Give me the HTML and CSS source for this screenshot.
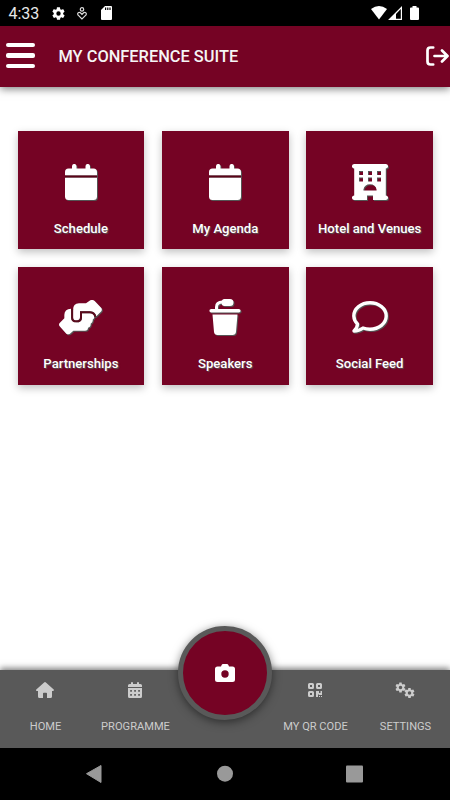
FILE: index.html
```html
<!DOCTYPE html>
<html lang="en">
<head>
    <meta charset="UTF-8">
    <meta name="viewport" content="width=device-width, initial-scale=1.0">
    <title>My Conference Suite</title>
    <link rel="stylesheet" href="styles.css">
</head>
<body>

    <!-- Shared shapes -->
    <svg class="defs" width="0" height="0">
        <symbol id="gear" viewBox="0 0 24 24">
            <path fill-rule="evenodd" d="M19.4 13a7.5 7.5 0 0 0 0-2l2.1-1.7c.2-.1.2-.4.1-.6l-2-3.5c-.1-.2-.4-.3-.6-.2l-2.5 1a7.7 7.7 0 0 0-1.7-1L14.4 2.4a.5.5 0 0 0-.5-.4h-4a.5.5 0 0 0-.5.4L9.1 5a7.7 7.7 0 0 0-1.7 1l-2.5-1c-.2-.1-.5 0-.6.2l-2 3.5c-.1.2-.1.5.1.6L4.5 11a7.5 7.5 0 0 0 0 2l-2.1 1.7c-.2.1-.2.4-.1.6l2 3.5c.1.2.4.3.6.2l2.5-1a7.7 7.7 0 0 0 1.7 1l.4 2.6c0 .2.2.4.5.4h4c.3 0 .5-.2.5-.4l.4-2.6a7.7 7.7 0 0 0 1.7-1l2.5 1c.2.1.5 0 .6-.2l2-3.5c.1-.2.1-.5-.1-.6zM12 15.5a3.5 3.5 0 1 1 0-7 3.5 3.5 0 0 1 0 7z"/>
        </symbol>
        <symbol id="calendar" viewBox="0 0 32 36">
            <path d="M0 11.5V8q0-3.5 3.5-3.5H7V2.2a2.200 2.200 0 0 1 4.500 0v2.300h9V2.200a2.200 2.200 0 0 1 4.500 0v2.300h3.500Q32 4.500 32 8v3.500zM0 13.500h32v19q0 3.500-3.500 3.500h-25Q0 36 0 32.500z"/>
            <path class="gap" d="M0 11.500h32v2H0z"/>
        </symbol>
    </svg>

    <div class="status-bar">
        <span class="time">4:33</span>
        <svg class="status-gear"><use href="#gear"/></svg>
        <svg class="status-care outline" width="10" height="13" viewBox="0 0 10 13" stroke="#ddd" stroke-width="1.2">
            <circle cx="5" cy="2.4" r="1.7"/>
            <path d="M5 12 1.2 8.2a1.500 1.500 0 0 1 2.200-2.400L5 7.400l1.600-1.600a1.500 1.500 0 0 1 2.200 2.400z"/>
        </svg>
        <svg class="status-sd" width="11" height="14" viewBox="0 0 11 14">
            <path fill-rule="evenodd" d="M4 0h6q1 0 1 1v12q0 1-1 1H1q-1 0-1-1V4zM4 1.500V4h1.200V1.500zM6.200 1.500V4h1.200V1.500zM8.400 1.500V4h1.200V1.500z"/>
        </svg>
        <div class="status-right">
            <svg width="16" height="14" viewBox="0 0 16 14"><path d="M0 3Q8-3 16 3L8 13.500z"/></svg>
            <svg class="signal" width="14" height="14" viewBox="0 0 14 14"><path fill-rule="evenodd" d="M14 0v14H0zM12.800 3 8 7.900V12.800h4.800z"/></svg>
            <svg width="9" height="14" viewBox="0 0 9 14"><path d="M2.500 0h4v1.500H8q1 0 1 1V13q0 1-1 1H1q-1 0-1-1V2.500q0-1 1-1h1.500z"/></svg>
        </div>
    </div>

    <header class="header">
        <button class="menu-btn" aria-label="Menu"><span></span><span></span><span></span></button>
        <h1>MY CONFERENCE SUITE</h1>
        <svg class="logout outline" width="23" height="20" viewBox="0 0 23 20" stroke="#fff" stroke-width="2.7" stroke-linecap="round" stroke-linejoin="round">
            <path d="M7.200 1.500H4.500q-3 0-3 3v11q0 3 3 3h2.700M8.500 10h12M16 4.500l5.500 5.500-5.500 5.500"/>
        </svg>
    </header>

    <main class="tiles">
        <a class="tile">
            <span class="tile-icon"><svg width="32" height="36"><use href="#calendar"/></svg></span>
            <span class="label">Schedule</span>
        </a>
        <a class="tile">
            <span class="tile-icon"><svg width="32" height="36"><use href="#calendar"/></svg></span>
            <span class="label">My Agenda</span>
        </a>
        <a class="tile">
            <span class="tile-icon">
                <svg width="36" height="36" viewBox="0 0 36 36">
                    <path fill-rule="evenodd" d="M2.200 0h31.600a2.200 2.200 0 0 1 0 4.500v27a2.200 2.200 0 0 1 0 4.500H21v-4.500h-6V36H2.200a2.200 2.200 0 0 1 0-4.500v-27a2.200 2.200 0 0 1 0-4.500zM7 7v4h4V7zM16 7v4h4V7zM25 7v4h4V7zM7 13.500v4h4v-4zM16 13.500v4h4v-4zM25 13.500v4h4v-4zM12 26.500h12q.8 0 .6-.8a6.700 6.700 0 0 0-13.200 0q-.2.800.6.800z"/>
                </svg>
            </span>
            <span class="label">Hotel and Venues</span>
        </a>
        <a class="tile">
            <span class="tile-icon">
                <svg width="43" height="35" viewBox="0 0 129 105">
                    <path d="M42 52V31Q42 10 60 10H81L94 1Q101-2 107 3L127 24Q130 29 127 34L112 49Q108 34 93 34H63V52Q63 58 58 60Q50 65 44 59Q42 56 42 52z"/>
                    <path d="M36 26Q16 27 16 45V55L2 69Q-2 74 2 79L22 101Q27 105 33 101L43 92H78Q87 92 87 83Q96 81 95 71Q103 66 101 59Q109 53 104 45Q101 39 92 40H69V53Q68 67 52 67Q37 66 36 53z"/>
                    <path class="grip" d="M39.500 27V53Q39.500 64 52 64Q66 64 66 53V37H92Q106 38 109 50"/>
                </svg>
            </span>
            <span class="label">Partnerships</span>
        </a>
        <a class="tile">
            <span class="tile-icon">
                <svg width="32" height="36" viewBox="0 0 32 36">
                    <path class="outline" d="M7.500 11V8q0-5 6-5" stroke="#fff" stroke-width="3"/>
                    <path d="M15.500 0H21a3.500 3.500 0 0 1 0 7h-5.500q-3 0-3-3.500t3-3.500zM2.200 10h27.600a1.800 1.800 0 0 1 0 3.600H2.200a1.800 1.800 0 0 1 0-3.600zM3.500 15.500h25l-1.500 17.500q-.4 3-3.500 3h-15Q5.400 36 5 33z"/>
                </svg>
            </span>
            <span class="label">Speakers</span>
        </a>
        <a class="tile">
            <span class="tile-icon">
                <svg class="outline" width="36" height="32" viewBox="0 0 36 32" stroke="#fff" stroke-width="3.4" stroke-linejoin="round">
                    <path d="M5.500 23A11.500 11.500 0 0 1 1.800 15C1.800 7.700 9 1.800 18 1.800S34.200 7.700 34.200 15 27 28.200 18 28.200q-3.800 0-7-1.200-4 3-9 3 3.500-3.500 3.500-7z"/>
                </svg>
            </span>
            <span class="label">Social Feed</span>
        </a>
    </main>

    <nav class="tab-bar">
        <a class="tab">
            <svg width="18" height="16" viewBox="0 0 18 16"><path d="M9 0q.5 0 .9.400l7.800 7q.5.600.1 1.200-.3.400-.8.400h-1v5.500q0 1.500-1.500 1.500H11v-4.500q0-.8-.8-.8H7.800q-.8 0-.8.800V16H3.500Q2 16 2 14.500V9H1Q.4 9 .1 8.500q-.2-.6.2-1.100l7.800-7Q8.500 0 9 0z"/></svg>
            <span>HOME</span>
        </a>
        <a class="tab">
            <svg width="14" height="16" viewBox="0 0 14 16"><path fill-rule="evenodd" d="M0 5V3.500Q0 2 1.500 2H3V1a1 1 0 0 1 2 0v1h4V1a1 1 0 0 1 2 0v1h1.500Q14 2 14 3.500V5zM0 6h14v8.500q0 1.500-1.500 1.500h-11Q0 16 0 14.500zM2.200 8v1.700h1.700V8zM6.200 8v1.700h1.700V8zM10.200 8v1.700h1.700V8zM2.200 12v1.700h1.700V12zM6.200 12v1.700h1.700V12zM10.200 12v1.700h1.700V12z"/></svg>
            <span>PROGRAMME</span>
        </a>
        <a class="fab">
            <svg width="20" height="18" viewBox="0 0 20 18"><path fill-rule="evenodd" d="M6.500 1.200Q6.900 0 8.200 0h3.600q1.300 0 1.700 1.200l.5 1.300h3.500Q20 2.500 20 5v10.500q0 2.500-2.500 2.500h-15Q0 18 0 15.500V5Q0 2.500 2.500 2.500H6zM10 6.300a3.700 3.700 0 1 0 0 7.400 3.700 3.700 0 1 0 0-7.400z"/></svg>
        </a>
        <a class="tab">
            <svg width="14" height="14" viewBox="0 0 14 14"><path fill-rule="evenodd" d="M1.500 0h3Q6 0 6 1.500v3Q6 6 4.500 6h-3Q0 6 0 4.500v-3Q0 0 1.500 0zM2 2v2h2V2zM9.500 0h3Q14 0 14 1.500v3Q14 6 12.500 6h-3Q8 6 8 4.500v-3Q8 0 9.500 0zM10 2v2h2V2zM1.500 8h3Q6 8 6 9.500v3Q6 14 4.500 14h-3Q0 14 0 12.500v-3Q0 8 1.500 8zM2 10v2h2v-2zM8 8h3v2h1.500V8H14v4h-3.500v-1H10v3H8zM11 13h1v1h-1zM13 13h1v1h-1z"/></svg>
            <span>MY QR CODE</span>
        </a>
        <a class="tab">
            <svg width="20" height="16" viewBox="0 0 20 16">
                <use href="#gear" x="-.5" y="-.5" width="12" height="12"/>
                <use href="#gear" x="8.5" y="5" width="12" height="12"/>
            </svg>
            <span>SETTINGS</span>
        </a>
    </nav>

    <div class="android-nav">
        <svg width="450" height="52" viewBox="0 0 450 52">
            <path d="M86.500 25.700 101 17.500v17z" stroke="#999" stroke-linejoin="round"/>
            <circle cx="225" cy="25.700" r="8"/>
            <rect x="346" y="17.500" width="17" height="17" rx="1"/>
        </svg>
    </div>

</body>
</html>
```

FILE: styles.css
```css
* {
    margin: 0;
    padding: 0;
    box-sizing: border-box;
}

body {
    height: 800px;
    display: flex;
    flex-direction: column;
    overflow: hidden;
    background-color: #fff;
    font-family: Roboto, Arial, sans-serif;
}

svg {
    display: block;
    fill: currentColor;
}

.outline {
    fill: none;
}

.defs {
    position: absolute;
}

/* Android status bar */
.status-bar {
    height: 26px;
    display: flex;
    align-items: center;
    padding: 0 31px 0 8.5px;
    background-color: #000;
    color: #fff;
    flex-shrink: 0;
}

.time {
    width: 42.5px;
    font-size: 16px;
    color: #e8e8e8;
    padding-top: 1px;
}

.status-gear {
    width: 15px;
    height: 15px;
}

.status-care {
    margin-left: 11px;
}

.status-sd {
    margin-left: 14px;
}

.status-right {
    display: flex;
    margin-left: auto;
}

.status-right .signal {
    margin: 0 8px 0 1px;
}

/* Header */
.header {
    height: 61px;
    display: flex;
    align-items: center;
    flex-shrink: 0;
    padding: 0 1.5px 0 6px;
    background-color: #750324;
    color: #fff;
    box-shadow: 0 2px 8px rgba(0, 0, 0, 0.5);
}

.menu-btn {
    width: 29px;
    display: flex;
    flex-direction: column;
    gap: 6px;
    padding-bottom: 2px;
    background: none;
    border: none;
}

.menu-btn span {
    height: 4.5px;
    border-radius: 2px;
    background-color: #fff;
}

.header h1 {
    margin-left: 23.5px;
    font-size: 16.4px;
    font-weight: 500;
    color: #f5f5f5;
}

.logout {
    margin-left: auto;
    margin-bottom: 1px;
}

/* Tiles */
.tiles {
    flex: 1;
    display: grid;
    grid-template-columns: repeat(3, 126.6px);
    grid-auto-rows: 118px;
    align-content: start;
    gap: 17.5px 17.8px;
    padding: 44.4px 0 0 17.6px;
}

.tile {
    display: flex;
    flex-direction: column;
    align-items: center;
    background-color: #750324;
    color: #fff;
    box-shadow: 0 3px 8px rgba(0, 0, 0, 0.25);
}

.tile-icon {
    height: 101px;
    display: flex;
    align-items: center;
    margin-bottom: -12.5px;
    filter: drop-shadow(1px 1px 0 #555);
}

.gap {
    fill: #5a0318;
}

.grip {
    fill: none;
    stroke: #5a0a1c;
    stroke-width: 6;
}

.label {
    font-size: 13.1px;
    font-weight: 500;
    line-height: 18px;
    text-shadow: 1px 1px 1px #555;
}

/* Bottom tabs */
.tab-bar {
    height: 78px;
    flex-shrink: 0;
    display: grid;
    grid-template-columns: repeat(5, 90px);
    background-color: #595959;
    color: #ccc;
    box-shadow: 0 -2px 6px rgba(0, 0, 0, 0.5);
}

.tab {
    display: flex;
    flex-direction: column;
    align-items: center;
    padding-top: 12px;
    font-size: 11.1px;
}

.tab svg {
    height: 16px;
}

.tab span {
    margin: 22px 0 0 1px;
    line-height: 14px;
    white-space: nowrap;
}

.fab {
    width: 94px;
    height: 94px;
    display: flex;
    align-items: center;
    justify-content: center;
    margin: -44px 0 0 -1.6px;
    border: 5px solid #595959;
    border-radius: 50%;
    background-color: #750324;
    color: #fff;
    box-shadow: 0 2px 10px rgba(0, 0, 0, 0.5);
}

/* Android navigation */
.android-nav {
    height: 52px;
    flex-shrink: 0;
    background-color: #000;
    color: #999;
}
```
